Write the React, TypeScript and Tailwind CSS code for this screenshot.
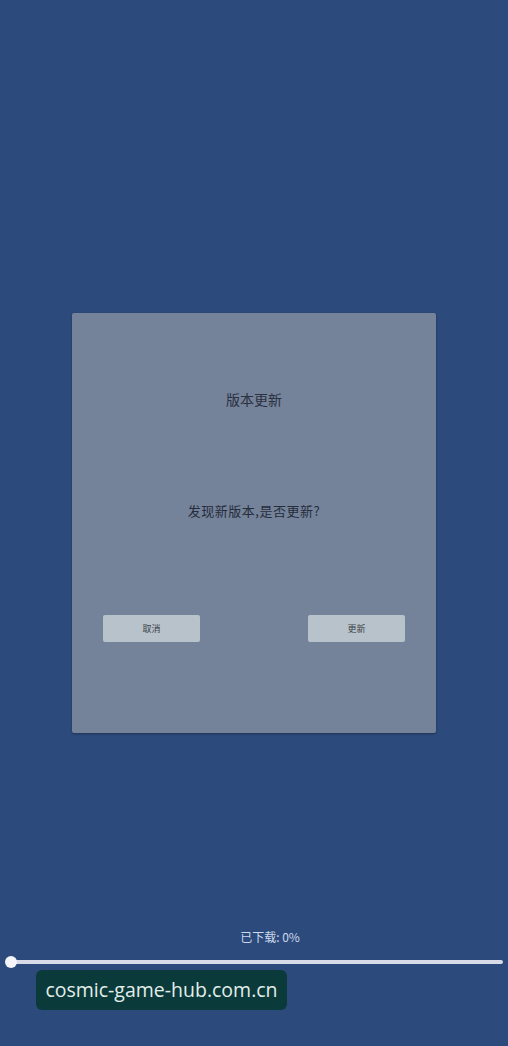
export default function App() {
  const cjk = { fontFamily: '"Noto Sans CJK SC", "Noto Sans", sans-serif' };

  return (
    <main
      className="h-[1046px] w-full bg-[#2c4a7b] flex flex-col overflow-hidden"
      style={cjk}
    >
      {/* update dialog */}
      <section className="mt-[313px] ml-[72px] w-[364px] h-[420px] bg-[#74829a] rounded-[2px] shadow-[0_1px_2px_rgba(20,30,50,0.5)] flex flex-col items-center">
        <h2 className="mt-[76px] text-[14px] leading-[20px] text-[#2a3140]">版本更新</h2>
        <p className="mt-[92px] text-[13px] leading-[20px] text-[#262d3a] tracking-[0.5px]">
          发现新版本,是否更新?
        </p>
        <div className="mt-[94px] w-full px-[31px] flex justify-between">
          <button className="w-[97px] h-[27px] bg-[#b8c2ca] rounded-[2px] text-[9px] text-[#3a4048]">
            取消
          </button>
          <button className="w-[97px] h-[27px] bg-[#b8c2ca] rounded-[2px] text-[9px] text-[#3a4048]">
            更新
          </button>
        </div>
      </section>

      {/* download progress */}
      <div className="mt-[196px] flex flex-col">
        <div className="pl-[32px] text-center text-[12px] leading-[16px] text-[#cdd8ec]">
          已下载: 0%
        </div>
        <div className="relative mt-[15px] ml-[10px] mr-[5px] h-[4px] bg-[#d8dbe8] rounded-full">
          <span className="absolute left-[-5px] top-[-4px] w-[12px] h-[12px] rounded-full bg-[#f4f5f8]" />
        </div>
        <div className="mt-[6px] ml-[36px] w-[251px] h-[40px] rounded-[6px] bg-[#0b3a3a] flex items-center justify-center">
          <span
            className="text-[19.5px] text-[#e2eeea]"
            style={{ fontFamily: '"Open Sans", "Noto Sans", sans-serif' }}
          >
            cosmic-game-hub.com.cn
          </span>
        </div>
      </div>
    </main>
  );
}
